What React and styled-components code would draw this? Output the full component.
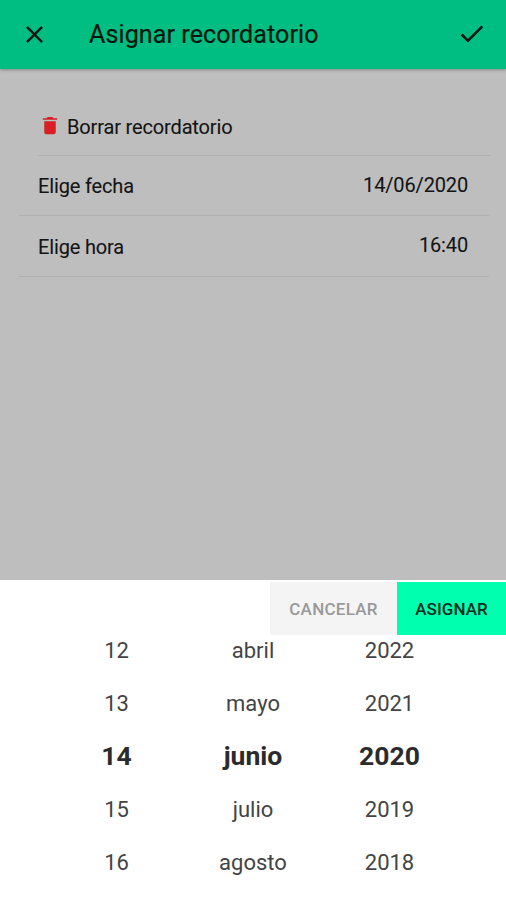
import React, { useState } from 'react';
import styled, { createGlobalStyle } from 'styled-components';
import { IoMdClose, IoMdCheckmark, IoMdTrash } from 'react-icons/io';

const GlobalStyle = createGlobalStyle`
  * {
    box-sizing: border-box;
  }

  body {
    margin: 0;
    font-family: Roboto, 'Liberation Sans', sans-serif;
  }

  button {
    margin: 0;
    padding: 0;
    border: none;
    background: none;
    color: inherit;
    font: inherit;
    cursor: pointer;
  }
`;

const Screen = styled.div`
  width: 100%;
  height: 900px;
  display: flex;
  flex-direction: column;
  overflow: hidden;
  background: #bebebe;
  color: #141414;
`;

const Toolbar = styled.header`
  height: 69px;
  flex: none;
  display: flex;
  align-items: center;
  padding: 0 19px 1px 20px;
  background: #00bd82;
  box-shadow: 0 1px 3px rgba(0, 0, 0, 0.3);
  color: #04170f;
`;

const Title = styled.h1`
  flex: 1;
  margin: 0 0 0 40px;
  padding-top: 1px;
  font-size: 25px;
  font-weight: 400;
  letter-spacing: 0.12px;
  line-height: 30px;
  -webkit-text-stroke: 0.2px;
`;

const IconButton = styled.button`
  display: flex;
  font-size: ${props => props.$size};
`;

const List = styled.div`
  flex: 1;
  padding: 27px 17px 0 19px;
`;

const Item = styled.div`
  height: ${props => props.$height || '60px'};
  margin-left: ${props => (props.$inset ? '19px' : '0')};
  margin-right: ${props => (props.$inset ? '-2px' : '0')};
  padding: ${props => (props.$inset ? '0' : '0 21px 0 19px')};
  display: flex;
  align-items: center;
  border-bottom: 1px solid #b0b0b0;
  font-size: 20px;
  line-height: 24px;
  -webkit-text-stroke: 0.1px;
`;

const TrashIcon = styled(IoMdTrash)`
  width: 24px;
  height: 23px;
  margin-right: 5px;
  color: #d81f26;
`;

const Label = styled.span`
  flex: 1;
  padding-top: ${props => (props.$low ? '2px' : '1px')};
  letter-spacing: -0.15px;
`;

const Value = styled.span`
  padding-bottom: 2px;
  letter-spacing: -0.15px;
`;

const Picker = styled.section`
  height: 320px;
  flex: none;
  padding-top: 2px;
  background: #fff;
`;

const Actions = styled.div`
  display: flex;
  justify-content: flex-end;
`;

const ActionButton = styled.button`
  width: ${props => (props.$primary ? '109px' : '127px')};
  height: 53px;
  background: ${props => (props.$primary ? '#00ffae' : '#f4f4f4')};
  color: ${props => (props.$primary ? '#052b1e' : '#999')};
  font-size: 17px;
  font-weight: 500;
  letter-spacing: ${props => (props.$primary ? '0.05px' : '0.25px')};
`;

const Wheels = styled.div`
  display: flex;
  justify-content: center;
  margin-top: -11px;
`;

const Wheel = styled.div`
  width: 136.5px;
  display: flex;
  flex-direction: column;
`;

const Option = styled.button`
  height: 53px;
  padding-bottom: ${props => (props.$selected ? '2px' : '0')};
  color: ${props => (props.$selected ? '#2b2b2b' : '#444')};
  font-size: ${props => (props.$selected ? '26.5px' : '22px')};
  font-weight: ${props => (props.$selected ? 700 : 400)};
  text-align: center;
`;

const wheels = [
  { name: 'day', options: ['12', '13', '14', '15', '16'] },
  { name: 'month', options: ['abril', 'mayo', 'junio', 'julio', 'agosto'] },
  { name: 'year', options: ['2022', '2021', '2020', '2019', '2018'] },
];

function App() {
  const [selected, setSelected] = useState({ day: '14', month: 'junio', year: '2020' });

  return (
    <>
      <GlobalStyle />
      <Screen>
        <Toolbar>
          <IconButton $size="29px" aria-label="Cerrar"><IoMdClose /></IconButton>
          <Title>Asignar recordatorio</Title>
          <IconButton $size="30px" aria-label="Guardar"><IoMdCheckmark /></IconButton>
        </Toolbar>
        <List>
          <Item $inset>
            <TrashIcon />
            <Label $low>Borrar recordatorio</Label>
          </Item>
          <Item>
            <Label>Elige fecha</Label>
            <Value>14/06/2020</Value>
          </Item>
          <Item $height="61px">
            <Label>Elige hora</Label>
            <Value>16:40</Value>
          </Item>
        </List>
        <Picker>
          <Actions>
            <ActionButton>CANCELAR</ActionButton>
            <ActionButton $primary>ASIGNAR</ActionButton>
          </Actions>
          <Wheels>
            {wheels.map(({ name, options }) => (
              <Wheel key={name}>
                {options.map(option => (
                  <Option
                    key={option}
                    $selected={selected[name] === option}
                    onClick={() => setSelected(prev => ({ ...prev, [name]: option }))}
                  >
                    {option}
                  </Option>
                ))}
              </Wheel>
            ))}
          </Wheels>
        </Picker>
      </Screen>
    </>
  );
}

export default App;
